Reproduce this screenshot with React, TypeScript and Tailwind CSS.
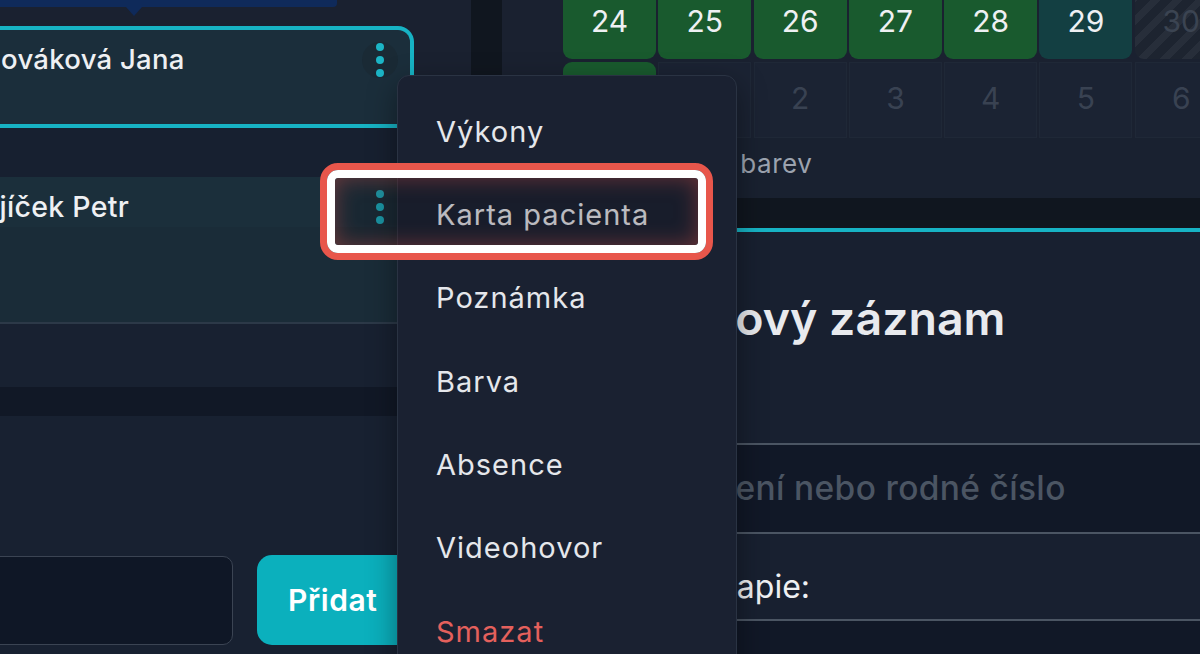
import React from "react";

const Dots = () => (
  <svg width="8" height="34" viewBox="0 0 8 34" fill="#1cb5c6">
    <circle cx="4" cy="4" r="4" />
    <circle cx="4" cy="17" r="4" />
    <circle cx="4" cy="30" r="4" />
  </svg>
);

const menuItems = ["Výkony", "Karta pacienta", "Poznámka", "Barva", "Absence", "Videohovor"];

export default function App() {
  return (
    <div
      className="relative flex w-[1200px] h-[654px] overflow-hidden bg-[#182131] text-[#e5e7eb]"
      style={{ fontFamily: "Inter, 'Noto Sans', sans-serif" }}
    >
      {/* Left panel */}
      <div className="relative w-[471px] shrink-0 bg-[#1a2130] overflow-hidden">
        <div className="-ml-[60px] w-[531px] flex flex-col">
          <div className="h-[26px] shrink-0" />
          {/* Card 1 */}
          <div className="w-[474px] h-[102px] shrink-0 bg-[#1b2e3b] border-t-4 border-r-4 border-b-4 border-[#17b3c4] rounded-tr-[16px] rounded-br-[16px] flex justify-between items-start">
            <div className="pl-[40px] pt-[13px] text-[27.5px] leading-[33px] font-medium tracking-[0.01em] text-[#eef0f3] whitespace-nowrap">
              Nováková Jana
            </div>
            <div className="mt-[12px] mr-[12px] w-[36px] h-[36px] rounded-full bg-[#1a2a35] flex items-center justify-center">
              <Dots />
            </div>
          </div>
          <div className="h-[49px] shrink-0 bg-[#172030]" />
          {/* Card 2 */}
          <div className="w-[474px] shrink-0 flex flex-col border-b-2 border-[#2c3948]">
            <div className="h-[50px] bg-[#1b2f3b] flex justify-between items-start">
              <div className="pl-[12px] pt-[13px] text-[28.5px] leading-[33px] font-medium tracking-[0.01em] text-[#eef0f3] whitespace-nowrap">
                Krajíček Petr
              </div>
            </div>
            <div className="h-[95px] bg-[#1a2c38]" />
          </div>
          <div className="h-[63px] shrink-0 bg-[#182131]" />
          <div className="h-[29px] shrink-0 bg-[#111826]" />
          <div className="h-[140px] shrink-0 bg-[#182131]" />
          <div className="h-[90px] shrink-0 flex gap-[24px] bg-[#182131]">
            <div className="w-[293px] h-[89px] rounded-[10px] border border-[#3b4453] bg-[#0f1726]" />
            <div className="w-[170px] h-[90px] -mt-[1px] rounded-[15px] bg-[#0bb0bd] pl-[31px] flex items-center text-[30px] font-semibold tracking-[0.02em] text-white">
              Přidat
            </div>
          </div>
          <div className="h-[20px] shrink-0 bg-[#182131]" />
        </div>
        {/* card 2 dots */}
        <div className="absolute left-[362px] top-[189px] w-[36px] h-[36px] flex items-center justify-center">
          <Dots />
        </div>
        {/* tooltip */}
        <div className="absolute left-0 top-0 w-[337px] h-[7px] bg-[#0f2a5a] rounded-br-[4px]" />
        <div className="absolute left-[126px] top-[7px] w-0 h-0 border-l-[8px] border-r-[8px] border-t-[9px] border-l-transparent border-r-transparent border-t-[#0f2a5a]" />
      </div>

      {/* Dark strip */}
      <div className="w-[31px] shrink-0 bg-[#10161f]" />

      {/* Right panel */}
      <div className="w-[698px] shrink-0 flex flex-col bg-[#1a2130] overflow-hidden">
        <div className="pl-[61px] shrink-0 flex flex-col gap-[3px]">
          <div className="flex gap-[2.3px] -mt-[30px]">
            {["24", "25", "26", "27", "28"].map((d) => (
              <div key={d} className="w-[93px] h-[89px] shrink-0 rounded-b-[9px] bg-[#195a2e] flex justify-center pt-[33px] text-[30px] leading-[36px] text-[#eef0f3]">
                {d}
              </div>
            ))}
            <div className="w-[93px] h-[89px] shrink-0 rounded-b-[9px] bg-[#133f42] flex justify-center pt-[33px] text-[30px] leading-[36px] text-[#eef0f3]">
              29
            </div>
            <div className="w-[93px] h-[89px] shrink-0 rounded-bl-[9px] bg-[repeating-linear-gradient(135deg,#272e3a_0px,#272e3a_7px,#1d2430_7px,#1d2430_16px)] flex justify-center pt-[33px] text-[30px] leading-[36px] text-[#3b4452]">
              30
            </div>
          </div>
          <div className="flex gap-[2.3px]">
            <div className="w-[93px] h-[76px] shrink-0 rounded-t-[9px] bg-[#195a2e] flex justify-center pt-[18px] text-[30px] leading-[36px] text-[#eef0f3]">
              31
            </div>
            {["1", "2", "3", "4", "5", "6"].map((d) => (
              <div key={d} className="w-[93px] h-[76px] shrink-0 bg-[#1b2333] border border-[#1f2837] flex justify-center pt-[17px] text-[30px] leading-[36px] text-[#394252]">
                {d}
              </div>
            ))}
          </div>
        </div>
        <div className="h-[60px] shrink-0 flex items-center pb-[10px] pl-[120px] text-[26px] tracking-[0.02em] text-[#9ca3af] whitespace-nowrap bg-[#192130]">
          Legenda barev
        </div>
        <div className="h-[30px] shrink-0 bg-[#10161f]" />
        <div className="h-[4px] shrink-0 bg-[#17b3c4]" />
        <div className="shrink-0 flex flex-col bg-[#182030]">
          <div className="mt-[58px] ml-[198px] text-[46.5px] leading-[56px] font-semibold text-[#e8eaee] whitespace-nowrap">
            Nový záznam
          </div>
          <div className="mt-[97px] h-[91px] border-t-2 border-b-2 border-[#4b5563] bg-[#111827] flex items-center pl-[21px] text-[33.5px] font-medium tracking-[0.01em] text-[#4b5563] whitespace-nowrap">
            Jméno, příjmení nebo rodné číslo
          </div>
          <div className="mt-[34px] ml-[186px] text-[32px] leading-[38px] text-[#eef0f3] whitespace-nowrap">
            Terapie:
          </div>
          <div className="mt-[13px] h-[60px] border-t-2 border-[#4b5563] bg-[#111827]" />
        </div>
      </div>

      {/* Dropdown menu */}
      <div className="absolute left-[397px] top-[75px] w-[340px] h-[620px] rounded-[12px] border border-[#2a3343] bg-[#1a2131] shadow-[0_10px_30px_rgba(0,0,0,0.4)] pt-[14px] flex flex-col">
        {menuItems.map((m) => (
          <div key={m} className="h-[83.3px] shrink-0 flex items-center pl-[38px] text-[29px] tracking-[0.035em] text-[#e5e7eb]">
            {m}
          </div>
        ))}
        <div className="h-[83.3px] shrink-0 flex items-center pl-[38px] text-[29px] tracking-[0.035em] text-[#e4605c]">
          Smazat
        </div>
      </div>

      {/* Highlight annotation */}
      <div className="absolute left-[320px] top-[163px] w-[393px] h-[97px] rounded-[18px] border-[7px] border-[#e8564b]">
        <div className="w-full h-full rounded-[11px] border-[8px] border-white">
          <div className="w-full h-full rounded-[4px] bg-[rgba(22,16,22,0.2)] shadow-[inset_0_0_22px_rgba(232,86,75,0.4)]" />
        </div>
      </div>
    </div>
  );
}
